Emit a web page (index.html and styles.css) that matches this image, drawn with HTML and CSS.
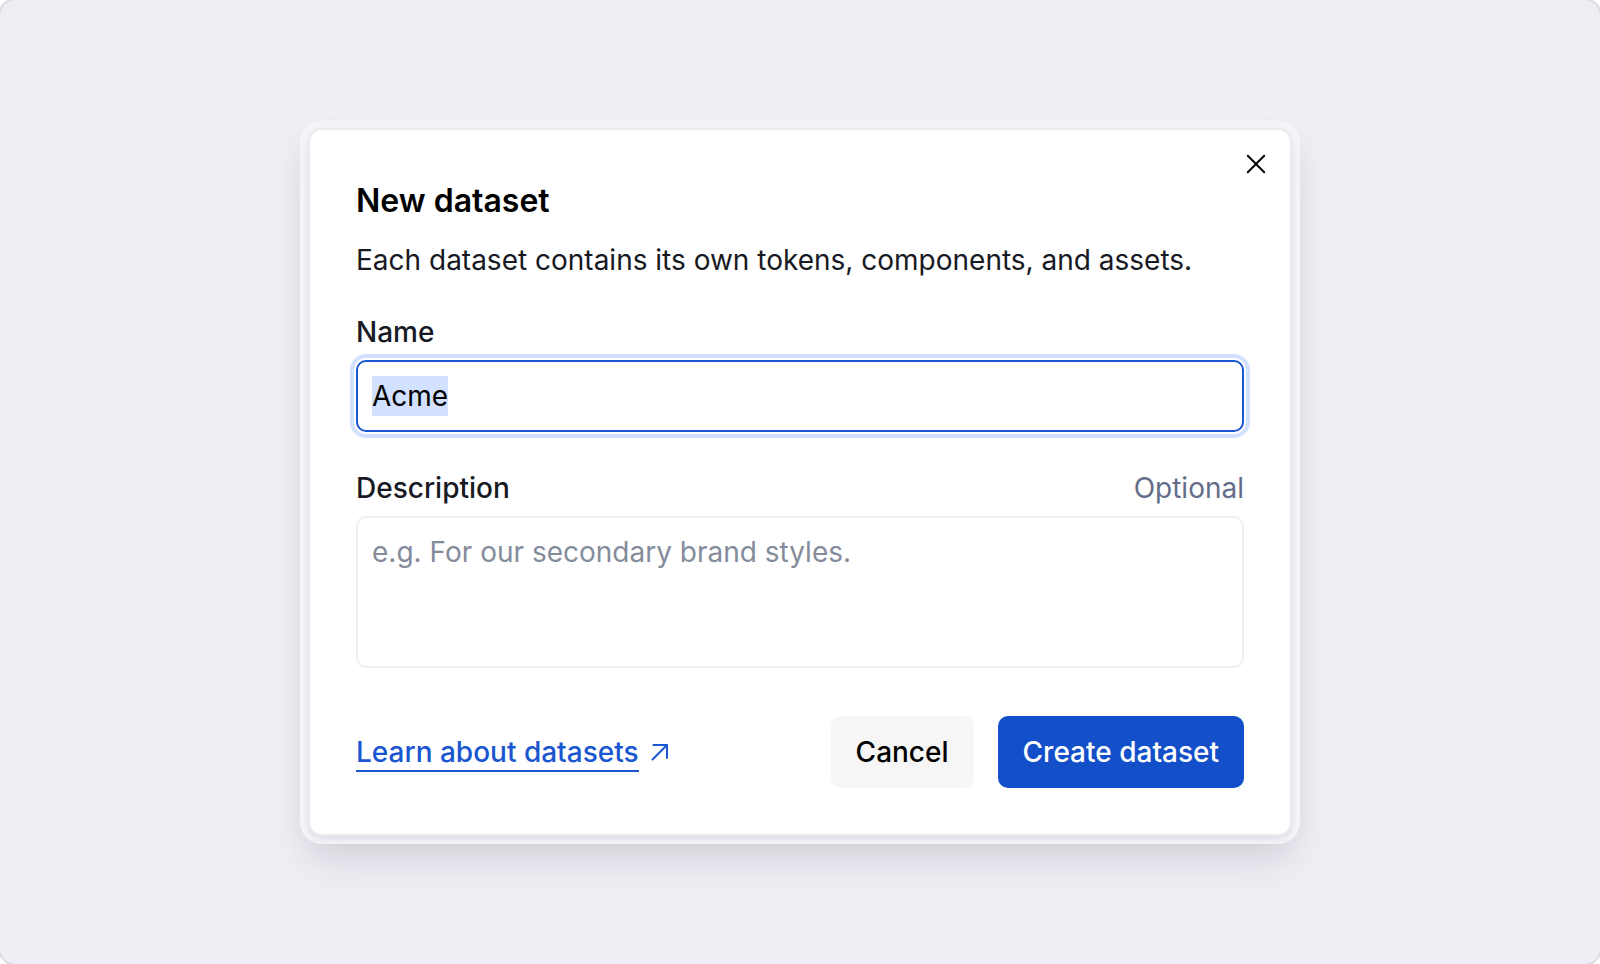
FILE: index.html
```html
<!DOCTYPE html>
<html lang="en">
<head>
    <meta charset="UTF-8">
    <meta name="viewport" content="width=device-width, initial-scale=1.0">
    <title>New dataset</title>
    <link rel="stylesheet" href="styles.css">
</head>
<body>
    <main class="stage">
        <form class="dialog" role="dialog" aria-labelledby="dialogTitle">
            <button type="button" class="close" aria-label="Close">
                <svg width="20" height="20" viewBox="0 0 20 20" fill="none" stroke="currentColor" stroke-width="2" stroke-linecap="round">
                    <path d="M1.8 1.8L18.2 18.2M18.2 1.8L1.8 18.2"/>
                </svg>
            </button>

            <h1 class="title" id="dialogTitle">New dataset</h1>
            <p class="intro">Each dataset contains its own tokens, components, and assets.</p>

            <div class="field">
                <label for="name">Name</label>
                <input type="text" class="control" id="name" value="Acme" autocomplete="off" spellcheck="false" autofocus>
            </div>

            <div class="field">
                <div class="field-head">
                    <label for="description">Description</label>
                    <span class="hint">Optional</span>
                </div>
                <textarea class="control" id="description" rows="3" placeholder="e.g. For our secondary brand styles."></textarea>
            </div>

            <div class="footer">
                <a class="learn" href="#">
                    <span class="learn-text">Learn about datasets</span>
                    <svg width="18" height="18" viewBox="0 0 18 18" fill="none" stroke="currentColor" stroke-width="2" stroke-linecap="round" stroke-linejoin="round">
                        <path d="M2.5 2H16V15M16 2L1.5 16.5"/>
                    </svg>
                </a>
                <div class="actions">
                    <button type="button" class="btn btn-cancel">Cancel</button>
                    <button type="submit" class="btn btn-create">Create dataset</button>
                </div>
            </div>
        </form>
    </main>

    <script>
        // start with the name selected so typing replaces it
        const nameInput = document.getElementById("name");
        nameInput.focus();
        nameInput.select();
    </script>
</body>
</html>
```
FILE: styles.css
```css
* {
    box-sizing: border-box;
}
body {
    margin: 0;
    background-color: #fff;
    color: #171923;
    font-family: Inter, sans-serif;
    font-size: 28px;
    line-height: 40px;
}
.stage {
    display: flex;
    align-items: center;
    justify-content: center;
    min-height: 100vh;
    padding: 24px;
    background-color: #eeeff5;
    border-radius: 16px;
    box-shadow: 0 0 0 2px #dadbe3;
}

/* dialog */
.dialog {
    position: relative;
    width: 100%;
    max-width: 980px;
    padding: 46px;
    background-color: #fff;
    border-radius: 12px;
    box-shadow:
        0 0 0 2px #ebebed,
        0 3px 6px 1px rgba(20, 20, 40, 0.12),
        0 0 0 10px #f3f4f8,
        0 24px 48px rgba(20, 20, 30, 0.1),
        0 12px 32px rgba(20, 20, 30, 0.08);
}
.title {
    margin: 0 0 14px;
    color: #000;
    font-size: 32px;
    font-weight: 600;
    line-height: 50px;
}
.intro {
    margin: 0 0 32px;
}
.close {
    position: absolute;
    top: 16px;
    right: 16px;
    display: flex;
    padding: 8px;
    border: none;
    background: none;
    color: #000;
    cursor: pointer;
}

/* fields */
.field {
    display: flex;
    flex-direction: column;
    gap: 8px;
}
.field + .field {
    margin-top: 36px;
}
.field label {
    font-weight: 500;
}
.field-head {
    display: flex;
    justify-content: space-between;
}
.hint {
    color: #636d8a;
}
.control {
    display: block;
    width: 100%;
    padding: 14px;
    border: 2px solid #eeeff5;
    border-radius: 10px;
    background-color: #fff;
    color: #000;
    font: inherit;
    resize: none;
}
textarea.control {
    overflow: hidden;
}
.control::placeholder {
    color: #848c9b;
    opacity: 1;
}
.control:focus {
    border-color: #1a56d0;
    outline: 4px solid #d1e1ff;
    outline-offset: 2px;
}
.control::selection {
    background-color: rgba(209, 225, 255, 0.99);
    color: #000;
}

/* footer */
.footer {
    display: flex;
    align-items: center;
    justify-content: space-between;
    margin-top: 48px;
}
.learn {
    display: flex;
    align-items: center;
    gap: 12px;
    color: #1a56d0;
    font-weight: 500;
    line-height: 36px;
    text-decoration: none;
}
.learn-text {
    box-shadow: 0 2px 0 currentColor;
}
.actions {
    display: flex;
    gap: 24px;
}
.btn {
    padding: 16px 25px;
    border: none;
    border-radius: 10px;
    font: inherit;
    font-weight: 500;
    cursor: pointer;
}
.btn-cancel {
    background-color: #f6f6f6;
    color: #000;
}
.btn-create {
    background-color: #124fc8;
    color: #fff;
}
```
